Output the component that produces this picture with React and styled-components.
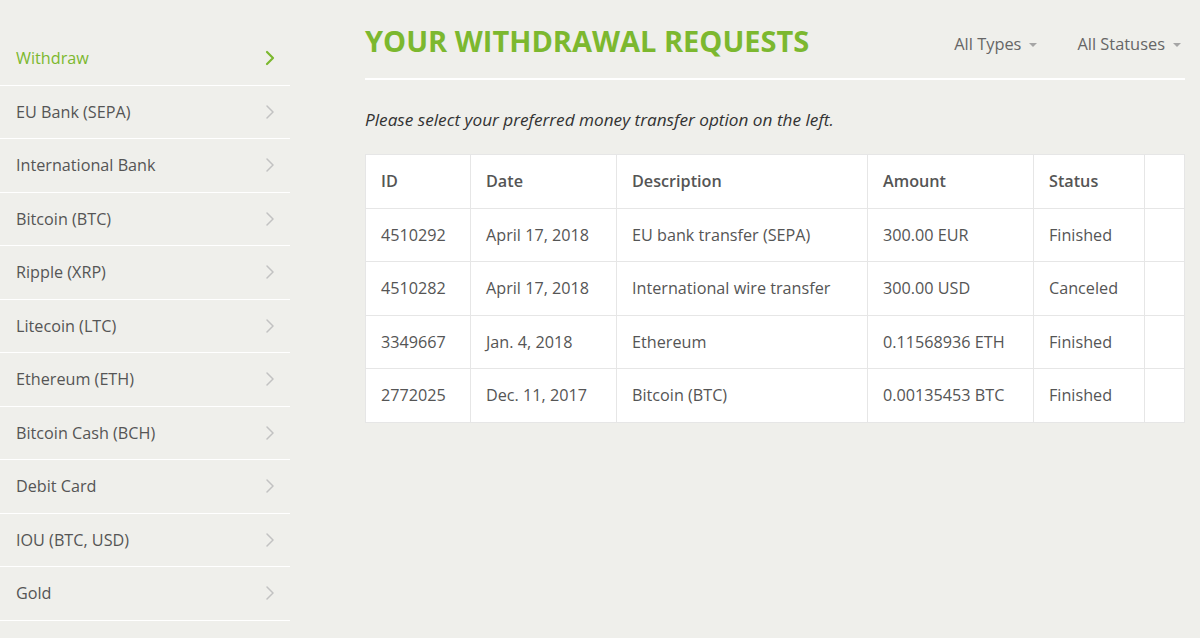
import React from "react";
import styled, { createGlobalStyle } from "styled-components";

const Global = createGlobalStyle`
  html, body { margin: 0; padding: 0; background: #efefeb; }
  body { font-family: "Open Sans", "Liberation Sans", sans-serif; color: #555; }
  * { box-sizing: border-box; }
`;

const Page = styled.div`
  display: grid;
  grid-template-columns: 290px 1fr;
  column-gap: 75px;
  padding: 0 16px 0 0;
  width: 1200px;
  height: 638px;
  overflow: hidden;
`;

const Side = styled.nav`
  display: flex;
  flex-direction: column;
  padding-top: 32px;
`;

const SideItem = styled.a`
  display: flex;
  align-items: center;
  justify-content: space-between;
  height: 53.5px;
  padding: 0 15px 0 16px;
  border-bottom: 1px solid #fff;
  font-size: 16.2px;
  color: ${(p) => (p.$active ? "#7cb82f" : "#555")};
  text-decoration: none;
  svg { color: ${(p) => (p.$active ? "#7cb82f" : "#c2c2c2")}; }
`;

const Main = styled.main`
  display: flex;
  flex-direction: column;
`;

const Header = styled.div`
  display: flex;
  align-items: flex-start;
  justify-content: space-between;
  height: 80px;
  padding-top: 21px;
  border-bottom: 2px solid #fff;
`;

const Title = styled.h1`
  margin: 0;
  font-size: 29px;
  line-height: 40px;
  font-weight: 700;
  color: #7cb82f;
`;

const Filters = styled.div`
  display: flex;
  gap: 40px;
  margin-top: 12px;
  margin-right: 4px;
`;

const Filter = styled.span`
  display: flex;
  align-items: center;
  gap: 8px;
  font-size: 16.4px;
  line-height: 22px;
  color: #666;
  &::after {
    content: "";
    border-left: 4px solid transparent;
    border-right: 4px solid transparent;
    border-top: 4px solid #a5a5a5;
    margin-top: 1px;
  }
`;

const Note = styled.p`
  margin: 28px 0 22px 0;
  font-size: 17.2px;
  line-height: 24px;
  font-style: italic;
  color: #333;
`;

const Table = styled.table`
  border-collapse: collapse;
  background: #fff;
  width: 819px;
  font-size: 16.2px;
  color: #555;
  table-layout: fixed;
`;

const Th = styled.th`
  text-align: left;
  font-weight: 600;
  height: 53.5px;
  padding: 0 15px;
  border: 1px solid #e6e6e6;
  width: ${(p) => p.$w}px;
`;

const Td = styled.td`
  height: 53.5px;
  padding: 0 15px;
  border: 1px solid #e6e6e6;
  white-space: nowrap;
`;

const Chevron = ({ active }) => (
  <svg width="10" height="16" viewBox="0 0 10 16" fill="none">
    <path
      d="M2 2l6 6-6 6"
      stroke="currentColor"
      strokeWidth={active ? 2.2 : 1.5}
      strokeLinecap="round"
      strokeLinejoin="round"
    />
  </svg>
);

const items = [
  "Withdraw",
  "EU Bank (SEPA)",
  "International Bank",
  "Bitcoin (BTC)",
  "Ripple (XRP)",
  "Litecoin (LTC)",
  "Ethereum (ETH)",
  "Bitcoin Cash (BCH)",
  "Debit Card",
  "IOU (BTC, USD)",
  "Gold",
];

const rows = [
  ["4510292", "April 17, 2018", "EU bank transfer (SEPA)", "300.00 EUR", "Finished"],
  ["4510282", "April 17, 2018", "International wire transfer", "300.00 USD", "Canceled"],
  ["3349667", "Jan. 4, 2018", "Ethereum", "0.11568936 ETH", "Finished"],
  ["2772025", "Dec. 11, 2017", "Bitcoin (BTC)", "0.00135453 BTC", "Finished"],
];

const cols = [
  ["ID", 105],
  ["Date", 146],
  ["Description", 251],
  ["Amount", 166],
  ["Status", 111],
  ["", 40],
];

export default function App() {
  return (
    <>
      <Global />
      <Page>
        <Side>
          {items.map((t, i) => (
            <SideItem key={t} $active={i === 0} href="#">
              {t}
              <Chevron active={i === 0} />
            </SideItem>
          ))}
        </Side>
        <Main>
          <Header>
            <Title>YOUR WITHDRAWAL REQUESTS</Title>
            <Filters>
              <Filter>All Types</Filter>
              <Filter>All Statuses</Filter>
            </Filters>
          </Header>
          <Note>Please select your preferred money transfer option on the left.</Note>
          <Table>
            <thead>
              <tr>
                {cols.map(([c, w], i) => (
                  <Th key={i} $w={w}>{c}</Th>
                ))}
              </tr>
            </thead>
            <tbody>
              {rows.map((r) => (
                <tr key={r[0]}>
                  {r.map((c, i) => (
                    <Td key={i}>{c}</Td>
                  ))}
                  <Td />
                </tr>
              ))}
            </tbody>
          </Table>
        </Main>
      </Page>
    </>
  );
}
